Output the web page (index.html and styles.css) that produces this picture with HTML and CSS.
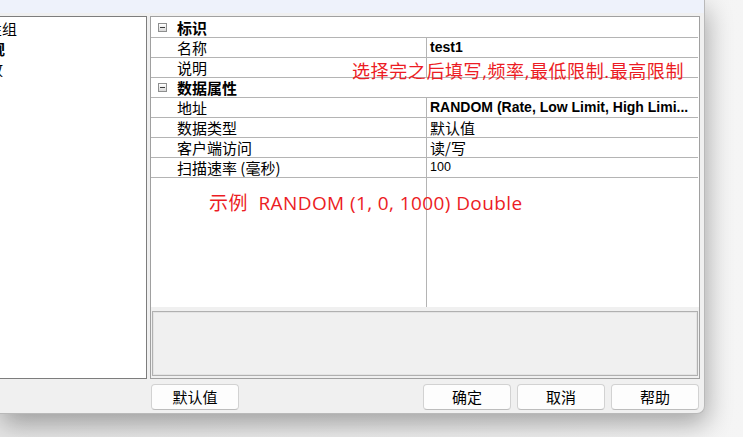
FILE: index.html
```html
<!DOCTYPE html>
<html lang="zh-CN">
<head>
<meta charset="utf-8">
<title>属性编辑器</title>
<link rel="stylesheet" href="styles.css">
</head>
<body>
<div class="screen">
  <div class="dialog">
    <div class="titlestrip"></div>
    <div class="main">
      <div class="tree">
        <div class="node parent">属性组</div>
        <div class="node child selected">常规</div>
        <div class="node child">缩放</div>
      </div>
      <div class="grid">
        <div class="props">
          <div class="row category"><span class="expander"></span><span class="cat-label">标识</span></div>
          <div class="row"><span class="name">名称</span><span class="value bold">test1</span></div>
          <div class="row"><span class="name">说明</span><span class="value"></span></div>
          <div class="row category"><span class="expander"></span><span class="cat-label">数据属性</span></div>
          <div class="row"><span class="name">地址</span><span class="value bold">RANDOM (Rate, Low Limit, High Limi...</span></div>
          <div class="row"><span class="name">数据类型</span><span class="value cjk">默认值</span></div>
          <div class="row"><span class="name">客户端访问</span><span class="value cjk">读/写</span></div>
          <div class="row"><span class="name">扫描速率 (毫秒)</span><span class="value num">100</span></div>
          <div class="filler"><span class="name"></span><span class="value"></span></div>
        </div>
        <div class="desc-wrap"><div class="desc"></div></div>
      </div>
    </div>
    <div class="buttons">
      <button class="btn">默认值</button>
      <div class="btn-group">
        <button class="btn">确定</button>
        <button class="btn">取消</button>
        <button class="btn">帮助</button>
      </div>
    </div>
    <div class="note note-top">选择完之后填写,频率,最低限制.最高限制</div>
    <div class="note note-example">示例&nbsp;&nbsp;RANDOM (1, 0, 1000) Double</div>
  </div>
</div>
</body>
</html>
```
FILE: styles.css
```css
* { box-sizing: border-box; }
html, body { margin: 0; padding: 0; }
body {
  width: 743px;
  height: 437px;
  overflow: hidden;
  background: #f4f4f4;
  font-family: "Noto Sans CJK SC", "Noto Sans", sans-serif;
}
.screen {
  width: 743px;
  height: 437px;
  overflow: hidden;
  background: linear-gradient(90deg, #e6e6e6 0, #f5f5f5 100%);
}
.dialog {
  position: relative;
  width: 705px;
  height: 414px;
  background: #f0f0f0;
  border-right: 1px solid #b9b9b9;
  border-bottom: 1px solid #b9b9b9;
  border-bottom-right-radius: 8px;
  box-shadow: 2px 10px 26px rgba(0, 0, 0, 0.32);
  display: flex;
  flex-direction: column;
}
.titlestrip {
  height: 13px;
  background: #eef2fb;
  margin-bottom: 3px;
}
.main {
  display: flex;
  gap: 3px;
  height: 363px;
  padding-right: 4px;
}
.tree {
  width: 147px;
  height: 363px;
  background: #fff;
  border: 1px solid #7d7d7d;
  border-left: none;
  padding-top: 2px;
  font-size: 15px;
  color: #000;
}
.node {
  height: 20px;
  line-height: 20px;
  white-space: nowrap;
}
.node.parent { margin-left: -28px; }
.node.child { margin-left: -25px; }
.node.child + .node.child { margin-left: -27px; }
.node.selected { font-weight: bold; }

.grid {
  width: 550px;
  height: 363px;
  border: 1px solid #a0a0a0;
  display: flex;
  flex-direction: column;
}
.props {
  flex: 1;
  background: #fff;
  padding-top: 1px;
  padding-right: 1px;
  display: flex;
  flex-direction: column;
}
.row {
  height: 20px;
  border-bottom: 1px solid #b4b4b4;
  display: flex;
  align-items: center;
  font-size: 15px;
  line-height: 19px;
  color: #000;
}
.row.category { padding-left: 7px; }
.expander {
  position: relative;
  width: 9px;
  height: 9px;
  border: 1px solid #8e8f8f;
  background: linear-gradient(#ffffff, #d9d9d9);
}
.expander::after {
  content: "";
  position: absolute;
  left: 1px;
  top: 3px;
  width: 5px;
  height: 1px;
  background: #3c3c3c;
}
.cat-label {
  font-weight: bold;
  margin-left: 10px;
}
.name {
  width: 275px;
  flex: none;
  padding-left: 26px;
  white-space: nowrap;
  height: 100%;
  display: flex;
  align-items: center;
}
.value {
  flex: 1;
  height: 100%;
  border-left: 1px solid #b4b4b4;
  padding-left: 3px;
  white-space: nowrap;
  overflow: hidden;
  display: flex;
  align-items: center;
}
.value.bold {
  font-family: "Liberation Sans", Arial, sans-serif;
  font-weight: bold;
  font-size: 14px;
}
.value.num {
  font-family: "Liberation Sans", Arial, sans-serif;
  font-size: 12.5px;
}
.filler {
  flex: 1;
  display: flex;
}
.filler .name, .filler .value { height: auto; }

.desc-wrap {
  height: 71px;
  background: #f0f0f0;
  padding: 4px 1px 2px 1px;
}
.desc {
  height: 100%;
  border: 1px solid #b0b0b0;
  box-shadow: inset 0 0 0 1px #e4e4e4;
  background: #f0f0f0;
}

.buttons {
  display: flex;
  padding: 5px 5px 0 151px;
}
.btn-group {
  margin-left: auto;
  display: flex;
  gap: 6px;
}
.btn {
  width: 88px;
  height: 26px;
  margin: 0;
  padding: 0;
  background: #fdfdfd;
  border: 1px solid #d2d2d2;
  border-bottom-color: #bdbdbd;
  border-radius: 4px;
  font-family: "Noto Sans CJK SC", sans-serif;
  font-size: 15px;
  color: #000;
  line-height: 24px;
}

.note {
  position: absolute;
  color: #ec1c24;
  font-family: "Open Sans", "Noto Sans CJK SC", sans-serif;
  font-size: 18px;
  line-height: 18px;
  white-space: nowrap;
}
.note-top { left: 352px; top: 62px; letter-spacing: 0.6px; }
.note-example { left: 209px; top: 194px; font-size: 19px; line-height: 19px; letter-spacing: 0.4px; }
```
